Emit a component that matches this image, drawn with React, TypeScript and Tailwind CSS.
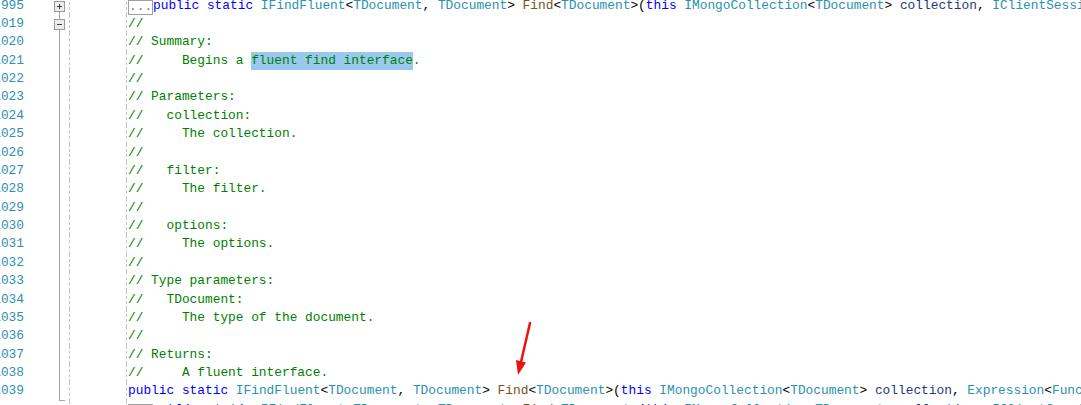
import type { ReactNode } from "react";

const kw = "text-[#0000ff]";
const ty = "text-[#2b91af]";
const fn = "text-[#74531f]";
const pm = "text-[#1f377f]";

type Fold = "plus" | "minus" | "line" | "end" | "none";

function FoldBox({ minus }: { minus?: boolean }) {
  return (
    <svg width="11" height="11" viewBox="0 0 11 11" className="shrink-0">
      <rect x="0.5" y="0.5" width="10" height="10" fill="#ececec" stroke="#9a9a9a" />
      <line x1="3" y1="5.5" x2="8" y2="5.5" stroke="#3c3c3c" />
      {!minus && <line x1="5.5" y1="3" x2="5.5" y2="8" stroke="#3c3c3c" />}
    </svg>
  );
}

function FoldCell({ fold }: { fold: Fold }) {
  return (
    <div className="w-[45px] shrink-0 h-full">
      <div className="ml-[30px] w-[11px] h-full flex flex-col items-center">
        {fold === "plus" && (
          <>
            <div className="h-[4px] shrink-0" />
            <FoldBox />
            <div className="w-px flex-1 bg-[#a5a5a5]" />
          </>
        )}
        {fold === "minus" && (
          <>
            <div className="w-px h-[4px] shrink-0 bg-[#a5a5a5]" />
            <FoldBox minus />
            <div className="w-px flex-1 bg-[#a5a5a5]" />
          </>
        )}
        {fold === "line" && <div className="w-px flex-1 bg-[#a5a5a5]" />}
        {fold === "end" && (
          <>
            <div className="w-px flex-1 bg-[#a5a5a5]" />
            <div className="h-px w-[6px] self-start ml-[5px] bg-[#a5a5a5]" />
          </>
        )}
      </div>
    </div>
  );
}

function Row({ num, fold, children }: { num: string; fold: Fold; children?: ReactNode }) {
  return (
    <div className="flex h-[18.38px] leading-[18.38px]">
      <div className="-ml-[7px] w-[31px] shrink-0 text-right text-[#2b91af]">{num}</div>
      <FoldCell fold={fold} />
      <div className="w-[57px] shrink-0 border-l border-dashed border-[#c4c4c4]" />
      <div className="flex-1 border-l border-dashed border-[#c4c4c4] pl-[1px] whitespace-pre text-black">
        {children}
      </div>
    </div>
  );
}

function Collapsed() {
  return (
    <span className="inline-block align-top mt-[3px] h-[15px] w-[25px] border border-[#a0a0a0] leading-[11px] text-[#808080]">
      ...
    </span>
  );
}

function Signature({ tail }: { tail: ReactNode }) {
  return (
    <>
      <span className={kw}>public</span> <span className={kw}>static</span>{" "}
      <span className={ty}>IFindFluent</span>&lt;<span className={ty}>TDocument</span>,{" "}
      <span className={ty}>TDocument</span>&gt; <span className={fn}>Find</span>&lt;
      <span className={ty}>TDocument</span>&gt;(<span className={kw}>this</span>{" "}
      <span className={ty}>IMongoCollection</span>&lt;<span className={ty}>TDocument</span>&gt;{" "}
      <span className={pm}>collection</span>, {tail}
    </>
  );
}

const sessionTail = (
  <>
    <span className={ty}>IClientSessionHandle</span> <span className={pm}>session</span>,{" "}
    <span className={ty}>FilterDefinition</span>&lt;<span className={ty}>TDocument</span>&gt;{" "}
    <span className={pm}>filter</span>
  </>
);

const exprTail = (
  <>
    <span className={ty}>Expression</span>&lt;<span className={ty}>Func</span>&lt;
    <span className={ty}>TDocument</span>, <span className={kw}>bool</span>&gt;&gt;{" "}
    <span className={pm}>filter</span>, <span className={ty}>FindOptions</span>{" "}
    <span className={pm}>options</span> = <span className={kw}>null</span>);
  </>
);

const comments: [string, string][] = [
  ["1019", "//"],
  ["1020", "// Summary:"],
  ["1021", "SEL"],
  ["1022", "//"],
  ["1023", "// Parameters:"],
  ["1024", "//   collection:"],
  ["1025", "//     The collection."],
  ["1026", "//"],
  ["1027", "//   filter:"],
  ["1028", "//     The filter."],
  ["1029", "//"],
  ["1030", "//   options:"],
  ["1031", "//     The options."],
  ["1032", "//"],
  ["1033", "// Type parameters:"],
  ["1034", "//   TDocument:"],
  ["1035", "//     The type of the document."],
  ["1036", "//"],
  ["1037", "// Returns:"],
  ["1038", "//     A fluent interface."],
];

export default function App() {
  return (
    <div className="relative w-[1081px] h-[405px] overflow-hidden bg-white font-['Liberation_Mono',monospace] text-[12.84px]">
      <div className="-mt-[3.4px]">
        <Row num="995" fold="plus">
          <Collapsed />
          <Signature tail={sessionTail} />
        </Row>
        {comments.map(([n, text], i) => (
          <Row key={n} num={n} fold={i === 0 ? "minus" : "line"}>
            {text === "SEL" ? (
              <span className="text-[#008000]">
                {"//     Begins a "}
                <span className="inline-block leading-[18.38px] bg-[#99c9ef]">fluent find interface</span>.
              </span>
            ) : (
              <span className="text-[#008000]">{text}</span>
            )}
          </Row>
        ))}
        <Row num="1039" fold="end">
          <Signature tail={exprTail} />
        </Row>
        <Row num="" fold="none">
          <Collapsed />
          <Signature tail={sessionTail} />
        </Row>
      </div>

      {/* red annotation arrow */}
      <svg className="absolute inset-0 pointer-events-none" width="1081" height="405" viewBox="0 0 1081 405">
        <line x1="530" y1="323" x2="521" y2="362" stroke="#f01010" strokeWidth="2.5" strokeLinecap="round" />
        <polygon points="518,375 526,362.5 516,360" fill="#f01010" />
      </svg>
    </div>
  );
}
